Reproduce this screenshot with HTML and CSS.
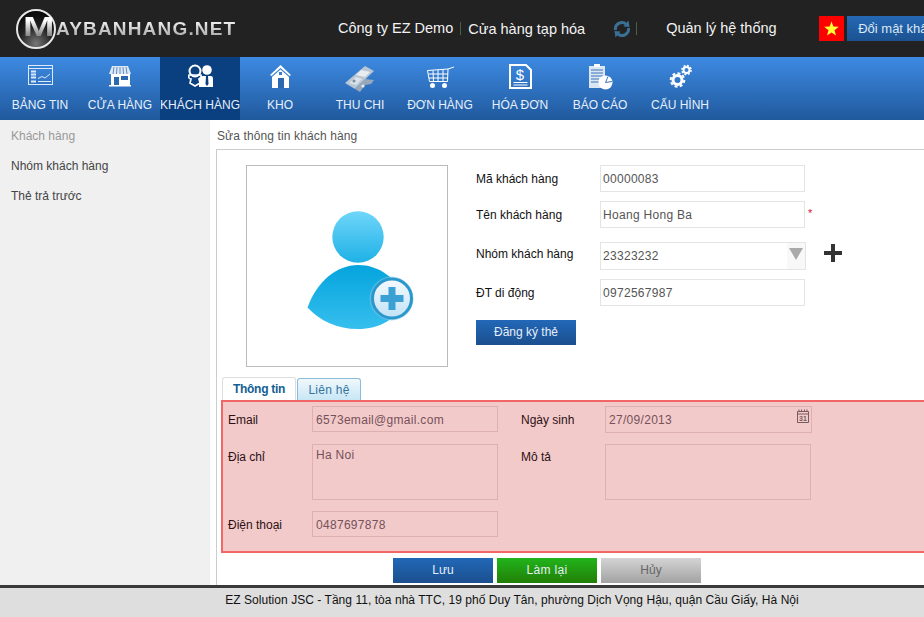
FILE: index.html
```html
<!DOCTYPE html>
<html>
    <head>
        <meta charset="utf-8">
        <title>Sửa thông tin khách hàng</title>
        <link rel="stylesheet" href="styles.css">
    </head>
    <body>
        <div class="page">
            <div class="topbar">
                <div class="logo">
                    <div class="logo-ring"><span class="logo-m">M</span></div>
                    <span class="logo-text">AYBANHANG.NET</span>
                </div>
                <div class="company">Công ty EZ Demo</div>
                <div class="store">Cửa hàng tạp hóa</div>
                <svg class="sync" width="18" height="20" viewBox="0 0 18 20">
                    <path d="M2.500 11 A6.500 6.500 0 0 1 13 5" fill="none" stroke="#3b7095" stroke-width="3"/>
                    <path d="M10.500 7.500 L16.500 8 L15.500 1.500 Z" fill="#3b7095"/>
                    <path d="M15.500 9 A6.500 6.500 0 0 1 5 15" fill="none" stroke="#3b7095" stroke-width="3"/>
                    <path d="M7.500 12.500 L1.500 12 L2.500 18.500 Z" fill="#3b7095"/>
                </svg>
                <div class="system">Quản lý hệ thống</div>
                <svg class="flag" width="25" height="25" viewBox="0 0 25 25">
                    <rect width="25" height="25" fill="#ff0000"/>
                    <path d="M12.500 5.500 L14.400 10.600 L19.800 10.800 L15.500 14.200 L17 19.500 L12.500 16.400 L8 19.500 L9.500 14.200 L5.200 10.800 L10.600 10.600 Z" fill="#ffff33"/>
                </svg>
                <a class="password">Đổi mật khẩu</a>
            </div>

            <div class="nav">
                <a class="nav-item">
                    <svg width="32" height="30" viewBox="0 0 32 30" fill="none" stroke="#dbe9f8">
                        <rect x="4.500" y="2.500" width="24" height="19"/>
                        <path d="M5 5.500 H28"/>
                        <path d="M7 8.500 H12 M7 11.500 H12 M7 14.500 H12 M7 18.500 H12" stroke-width="2"/>
                        <path d="M14 15.500 L18 13.500 L21 15 L26 11 M14 18.500 H27"/>
                    </svg>
                    <span>Bảng tin</span>
                </a>
                <a class="nav-item">
                    <svg width="32" height="30" viewBox="0 0 32 30">
                        <path d="M8 3 H24 L27 11 H5 Z" fill="#dfe9f5"/>
                        <path d="M10 4 L9 11 M13 4 L12.500 11 M16 4 V11 M19 4 L19.500 11 M22 4 L23 11" stroke="#5f8cc0"/>
                        <rect x="7" y="11" width="19" height="11" fill="#fff"/>
                        <rect x="10" y="14" width="5" height="8" fill="#2c68b0"/>
                        <rect x="17" y="13" width="7" height="4" fill="#2c68b0"/>
                        <rect x="5" y="22" width="22" height="1.500" fill="#fff"/>
                    </svg>
                    <span>Cửa hàng</span>
                </a>
                <a class="nav-item active">
                    <svg width="32" height="30" viewBox="0 0 32 30">
                        <circle cx="11" cy="8" r="5.500" fill="none" stroke="#fff" stroke-width="2"/>
                        <path d="M5 12 Q4 16 7 16 L6 20 L11 23 L16 20 L15 16 Q18 16 17 12 Z" fill="none" stroke="#fff" stroke-width="1.600"/>
                        <circle cx="23" cy="7" r="4.800" fill="#fff"/>
                        <path d="M15 24 V16 Q15 13 19 13 H27 Q29 13 29 16 V24 Z" fill="#fff"/>
                        <path d="M22 13 H24 L24.500 21 L23 23 L21.500 21 Z" fill="#0a3f80"/>
                    </svg>
                    <span>Khách hàng</span>
                </a>
                <a class="nav-item">
                    <svg width="32" height="30" viewBox="0 0 32 30">
                        <path d="M16.500 2 L27 12 L25.500 13 L16.500 5 L7.500 13 L6 12 Z" fill="#fff"/>
                        <path d="M16.500 6.500 L25 14 V25 H8 V14 Z" fill="#fff"/>
                        <rect x="15" y="9" width="3" height="3" fill="#3a7cc8"/>
                        <rect x="14" y="15" width="6" height="10" fill="#2c68b0"/>
                    </svg>
                    <span>Kho</span>
                </a>
                <a class="nav-item">
                    <svg width="32" height="30" viewBox="0 0 32 30">
                        <path d="M1 20 L21 3 L30 8 L11 26 Z" fill="#b9c6d4"/>
                        <path d="M17 7 L26 9 L21 14 L12 12 Z" fill="#e7ecf1"/>
                        <path d="M5 20 L12 14 L18 16 L12 22 Z" fill="#dbe2e9"/>
                        <path d="M11 26 L21 16 L30 17 L27 21 L21 22 L16 29 Z" fill="#98a8ba"/>
                        <circle cx="10" cy="18" r="1.600" fill="#7e90a6"/>
                        <circle cx="19" cy="23" r="1.600" fill="#e7ecf1"/>
                    </svg>
                    <span>Thu chi</span>
                </a>
                <a class="nav-item">
                    <svg width="32" height="30" viewBox="0 0 32 30" fill="none" stroke="#fff">
                        <path d="M3.500 7.500 L24 6 L30 4"/>
                        <path d="M3.500 7.500 L5.500 18.500 H23.500 L24 6"/>
                        <path d="M4.500 11 H24 M5 15 H24 M9 7.500 L9.500 18.500 M14 7 V18.500 M19 6.500 V18.500"/>
                        <circle cx="8.500" cy="22.500" r="2.500" fill="#fff" stroke="none"/>
                        <circle cx="20.500" cy="22.500" r="2.500" fill="#fff" stroke="none"/>
                    </svg>
                    <span>Đơn hàng</span>
                </a>
                <a class="nav-item">
                    <svg width="32" height="30" viewBox="0 0 32 30">
                        <path d="M6 2 H22 L27 7 V25 H6 Z" fill="none" stroke="#fff" stroke-width="2"/>
                        <text class="dollar" x="16" y="17">$</text>
                        <path d="M9.500 19.500 H23.500 M9.500 22 H23.500" stroke="#fff"/>
                    </svg>
                    <span>Hóa đơn</span>
                </a>
                <a class="nav-item">
                    <svg width="32" height="30" viewBox="0 0 32 30">
                        <rect x="5" y="3" width="16" height="22" fill="#dbe6f3"/>
                        <rect x="10" y="1" width="6" height="3" fill="#fff"/>
                        <path d="M7 7 H19 M7 10 H19 M7 13 H19 M7 16 H15 M7 19 H15" stroke="#3a74ba"/>
                        <circle cx="21.500" cy="19.500" r="7" fill="#fff"/>
                        <path d="M21.500 19.500 L24 13.500 M21.500 19.500 L28 18.500" stroke="#3a74ba"/>
                    </svg>
                    <span>Báo cáo</span>
                </a>
                <a class="nav-item">
                    <svg width="32" height="30" viewBox="0 0 32 30" fill="none" stroke="#fff">
                        <circle cx="13.500" cy="17" r="4.500" stroke-width="3"/>
                        <circle cx="13.500" cy="17" r="6.800" stroke-width="2" stroke-dasharray="3 2.300"/>
                        <circle cx="22.500" cy="7" r="3" stroke-width="2"/>
                        <circle cx="22.500" cy="7" r="4.600" stroke-width="1.500" stroke-dasharray="2 1.600"/>
                    </svg>
                    <span>Cấu hình</span>
                </a>
            </div>

            <div class="content">
                <div class="sidebar">
                    <a class="side-item current">Khách hàng</a>
                    <a class="side-item">Nhóm khách hàng</a>
                    <a class="side-item">Thẻ trả trước</a>
                </div>

                <div class="main">
                    <div class="title">Sửa thông tin khách hàng</div>
                    <div class="panel">
                        <div class="top-row">
                            <div class="photo">
                                <svg width="200" height="200" viewBox="0 0 200 200">
                                    <defs>
                                        <linearGradient id="head" x1="0" y1="0" x2="0" y2="1">
                                            <stop offset="0" stop-color="#6fd6fa"/>
                                            <stop offset="1" stop-color="#1fb1e6"/>
                                        </linearGradient>
                                        <linearGradient id="body" x1="0" y1="0" x2="0" y2="1">
                                            <stop offset="0" stop-color="#04a4dd"/>
                                            <stop offset="1" stop-color="#36bfee"/>
                                        </linearGradient>
                                        <linearGradient id="badge" x1="0" y1="0" x2="0" y2="1">
                                            <stop offset="0" stop-color="#f6fafd"/>
                                            <stop offset="1" stop-color="#c2e2f6"/>
                                        </linearGradient>
                                    </defs>
                                    <circle cx="111" cy="71" r="25.700" fill="url(#head)"/>
                                    <path d="M60.500 141.500 C70 115 90 99 111 99 C132 99 150 112 160 135 C150 153 132 163 111 163 C90 163 73 155 60.500 141.500 Z" fill="url(#body)"/>
                                    <circle cx="144.500" cy="132.500" r="22" fill="#7cc3e3" opacity="0.6"/>
                                    <circle cx="145" cy="132.500" r="19.500" fill="url(#badge)" stroke="#2b98cd" stroke-width="3"/>
                                    <path d="M141.500 121 H148.500 V129 H156.500 V136 H148.500 V144 H141.500 V136 H133.500 V129 H141.500 Z" fill="#3ba0d3"/>
                                </svg>
                            </div>
                            <div class="info">
                                <label class="info-row row-code">
                                    <span>Mã khách hàng</span>
                                    <input class="field" value="00000083">
                                </label>
                                <label class="info-row row-name">
                                    <span>Tên khách hàng</span>
                                    <input class="field" value="Hoang Hong Ba">
                                    <i class="required">*</i>
                                </label>
                                <div class="info-row row-group">
                                    <span>Nhóm khách hàng</span>
                                    <div class="combo">
                                        <div class="combo-value">23323232</div>
                                        <div class="combo-arrow"></div>
                                    </div>
                                    <svg class="add" width="18" height="18" viewBox="0 0 18 18">
                                        <path d="M7 0 H11 V7 H18 V11 H11 V18 H7 V11 H0 V7 H7 Z" fill="#333"/>
                                    </svg>
                                </div>
                                <label class="info-row row-phone">
                                    <span>ĐT di động</span>
                                    <input class="field" value="0972567987">
                                </label>
                                <a class="btn btn-blue">Đăng ký thẻ</a>
                            </div>
                        </div>

                        <div class="tabs">
                            <a class="tab active">Thông tin</a>
                            <a class="tab">Liên hệ</a>
                        </div>

                        <div class="error-box">
                            <div class="col col-left">
                                <label class="line">
                                    <span>Email</span>
                                    <input class="field pink" value="6573email@gmail.com">
                                </label>
                                <label class="line line-area">
                                    <span>Địa chỉ</span>
                                    <textarea class="field pink area">Ha Noi</textarea>
                                </label>
                                <label class="line">
                                    <span>Điện thoại</span>
                                    <input class="field pink" value="0487697878">
                                </label>
                            </div>
                            <div class="col col-right">
                                <label class="line">
                                    <span>Ngày sinh</span>
                                    <div class="date-wrap">
                                        <input class="field pink date" value="27/09/2013">
                                        <svg class="cal" width="12" height="14" viewBox="0 0 12 14">
                                            <path d="M.5 2.500 H11.500 V13.500 H.5 Z M.5 5 H11.500" fill="none" stroke="#7a5a5e"/>
                                            <path d="M2 .5 V3 M4.500 .5 V3 M7.500 .5 V3 M10 .5 V3" stroke="#7a5a5e"/>
                                            <text class="cal-day" x="6" y="12">31</text>
                                        </svg>
                                    </div>
                                </label>
                                <label class="line line-area">
                                    <span>Mô tả</span>
                                    <textarea class="field pink area"></textarea>
                                </label>
                            </div>
                        </div>

                        <div class="actions">
                            <a class="btn btn-blue">Lưu</a>
                            <a class="btn btn-green">Làm lại</a>
                            <a class="btn btn-gray">Hủy</a>
                        </div>
                    </div>
                </div>
            </div>

            <div class="footer">EZ Solution JSC - Tầng 11, tòa nhà TTC, 19 phố Duy Tân, phường Dịch Vọng Hậu, quận Cầu Giấy, Hà Nội</div>
        </div>
    </body>
</html>
```

FILE: styles.css
```css
* {
    box-sizing: border-box;
}
html,
body {
    margin: 0;
    height: 100%;
    overflow: hidden;
    background-color: white;
}
body {
    font-family: "Liberation Sans", Arial, sans-serif;
    font-size: 12px;
    color: #222;
}
.page {
    width: 1024px;
    height: 617px;
    display: flex;
    flex-direction: column;
}

/* top bar */
.topbar {
    height: 57px;
    background-color: #222;
    display: flex;
    align-items: center;
    color: #f2f2f2;
    font-size: 14.5px;
}
.logo {
    width: 338px;
    padding-left: 16px;
    display: flex;
    align-items: center;
}
.logo-ring {
    width: 40px;
    height: 40px;
    border: 2px solid #e6e6e6;
    border-radius: 50%;
    background: radial-gradient(circle at 50% 90%, #777 0%, #222 45%, #000 100%);
    text-align: center;
    line-height: 32px;
}
.logo-m {
    display: inline-block;
    font-size: 28px;
    font-weight: bold;
    transform: translateX(3px) scaleX(1.35);
    background: linear-gradient(#fff 30%, #8c8c8c 75%);
    -webkit-background-clip: text;
    background-clip: text;
    color: transparent;
}
.logo-text {
    font-size: 19px;
    font-weight: bold;
    letter-spacing: 1.18px;
    background: linear-gradient(#fff, #9a9a9a);
    -webkit-background-clip: text;
    background-clip: text;
    color: transparent;
}
.company {
    padding-right: 7px;
    border-right: 1px solid #4b5f4b;
    line-height: 13px;
}
.store {
    margin-left: 7px;
}
.sync {
    margin-left: 28px;
}
.system {
    margin-left: 5px;
    padding-left: 29px;
    border-left: 1px solid #4b5f4b;
    line-height: 13px;
    width: 183px;
}
.flag {
    display: block;
}
.password {
    margin-left: 3px;
    width: 120px;
    height: 25px;
    line-height: 25px;
    padding-left: 11px;
    font-size: 13px;
    color: #dce8f5;
    background: linear-gradient(#2568b4, #1c5290);
}

/* nav */
.nav {
    height: 63px;
    display: flex;
    background: linear-gradient(#3d8ae2, #20599d);
}
.nav-item {
    width: 80px;
    padding-top: 6px;
    display: flex;
    flex-direction: column;
    align-items: center;
    color: #e6f0fb;
    font-size: 12px;
    text-transform: uppercase;
    white-space: nowrap;
}
.nav-item svg {
    display: block;
    margin-bottom: 5px;
}
.nav-item.active {
    background: #0a3f80;
}
.dollar {
    font-family: "Liberation Sans", sans-serif;
    font-size: 15px;
    font-weight: normal;
    text-anchor: middle;
    fill: #fff;
}

/* body */
.content {
    flex: 1;
    display: flex;
    min-height: 0;
}
.sidebar {
    width: 210px;
    background-color: #f0f0f0;
    padding-top: 1px;
}
.side-item {
    display: block;
    height: 30px;
    line-height: 30px;
    padding-left: 11px;
    color: #444;
}
.side-item.current {
    color: #999;
}
.main {
    flex: 1;
    padding-left: 6px;
    display: flex;
    flex-direction: column;
}
.title {
    height: 29px;
    line-height: 32px;
    padding-left: 1px;
    letter-spacing: .12px;
    color: #555;
}
.panel {
    flex: 1;
    border: 1px solid #ccc;
    border-bottom: 0;
    border-right: 0;
    padding-top: 15px;
}
.top-row {
    display: flex;
    padding-left: 29px;
}
.photo {
    width: 202px;
    height: 202px;
    border: 1px solid #bbb;
}
.photo svg {
    display: block;
}
.info {
    margin-left: 28px;
}
.info-row {
    display: flex;
    align-items: center;
    height: 27px;
    color: #111;
}
.info-row > span {
    width: 124px;
}
.row-code {
    margin-bottom: 9px;
}
.row-name {
    margin-bottom: 14px;
}
.row-group {
    height: 28px;
    margin-bottom: 9px;
}
.row-group > span {
    margin-top: -4px;
}
.row-phone {
    margin-bottom: 14px;
}
.field {
    display: block;
    width: 205px;
    height: 27px;
    padding: 0 2px;
    border: 1px solid #e4e4e4;
    background-color: white;
    font-family: "Liberation Sans", Arial, sans-serif;
    font-size: 12px;
    letter-spacing: .3px;
    color: #555;
    outline: none;
    resize: none;
}
.required {
    margin: -4px 0 0 3px;
    color: #e01030;
    font-style: normal;
    font-size: 11px;
}
.combo {
    width: 206px;
    height: 28px;
    border: 1px solid #e4e4e4;
    display: flex;
    justify-content: space-between;
}
.combo-value {
    padding-left: 2px;
    line-height: 27px;
    letter-spacing: .3px;
    color: #555;
}
.combo-arrow {
    width: 18px;
    background-color: #f8f8f8;
    position: relative;
}
.combo-arrow::after {
    content: "";
    position: absolute;
    top: 5px;
    left: 2px;
    border-left: 7px solid transparent;
    border-right: 7px solid transparent;
    border-top: 12px solid #aaa;
}
.add {
    margin: -6px 0 0 18px;
}

/* tabs */
.tabs {
    display: flex;
    align-items: flex-end;
    height: 23px;
    margin: 10px 0 0 5px;
}
.tab {
    width: 64px;
    height: 22px;
    margin-left: 1px;
    line-height: 22px;
    letter-spacing: .25px;
    text-align: center;
    color: #34759f;
    border: 1px solid #8bbcd8;
    border-bottom: 0;
    border-radius: 3px 3px 0 0;
    background: linear-gradient(#f0f8fc, #c8e6f5);
}
.tab.active {
    width: 74px;
    height: 23px;
    margin-left: 0;
    letter-spacing: -.3px;
    color: #135e92;
    font-weight: bold;
    border-color: #ddd;
    background: white;
}

/* red box */
.error-box {
    height: 153px;
    margin-left: 4px;
    border: 2px solid #f26666;
    background-color: #f3caca;
    padding: 4px 0 0 5px;
    display: flex;
    color: #2c1114;
}
.col {
    display: flex;
    flex-direction: column;
}
.col-left {
    width: 293px;
}
.line {
    display: flex;
    align-items: flex-start;
    height: 26px;
    margin-bottom: 12px;
}
.line > span {
    width: 84px;
    height: 26px;
    line-height: 29px;
    flex: none;
}
.line-area {
    height: 56px;
    margin-bottom: 11px;
}
.line-area > span {
    line-height: 27px;
}
.field.pink {
    width: 186px;
    height: 26px;
    padding: 1px 3px 0;
    background-color: transparent;
    border-color: #deb0b2;
    color: #75525a;
}
.col-right .field.pink {
    width: 206px;
}
.field.pink.area {
    height: 56px;
    padding-top: 3px;
}
.date-wrap {
    position: relative;
}
.col-right .field.date {
    width: 207px;
    height: 27px;
}
.cal {
    position: absolute;
    top: 3px;
    right: 3px;
}
.cal-day {
    font-family: "Liberation Sans", sans-serif;
    font-size: 7px;
    font-weight: bold;
    text-anchor: middle;
    fill: #7a5a5e;
}

/* buttons */
.actions {
    display: flex;
    gap: 4px;
    margin: 5px 0 0 176px;
}
.btn {
    display: block;
    width: 100px;
    height: 25px;
    line-height: 25px;
    text-align: center;
    color: #e6eef8;
}
.btn-blue {
    background: linear-gradient(#2268b8, #1b4f8e);
}
.btn-green {
    background: linear-gradient(#22b41c, #217f06);
    letter-spacing: .3px;
}
.btn-gray {
    background: linear-gradient(#d4d4d4, #a2a2a2);
    color: #666;
}

/* footer */
.footer {
    height: 32px;
    border-top: 3px solid #3a3a3a;
    background-color: #dedede;
    color: #111;
    line-height: 24px;
    letter-spacing: .045px;
    text-align: center;
}
```
